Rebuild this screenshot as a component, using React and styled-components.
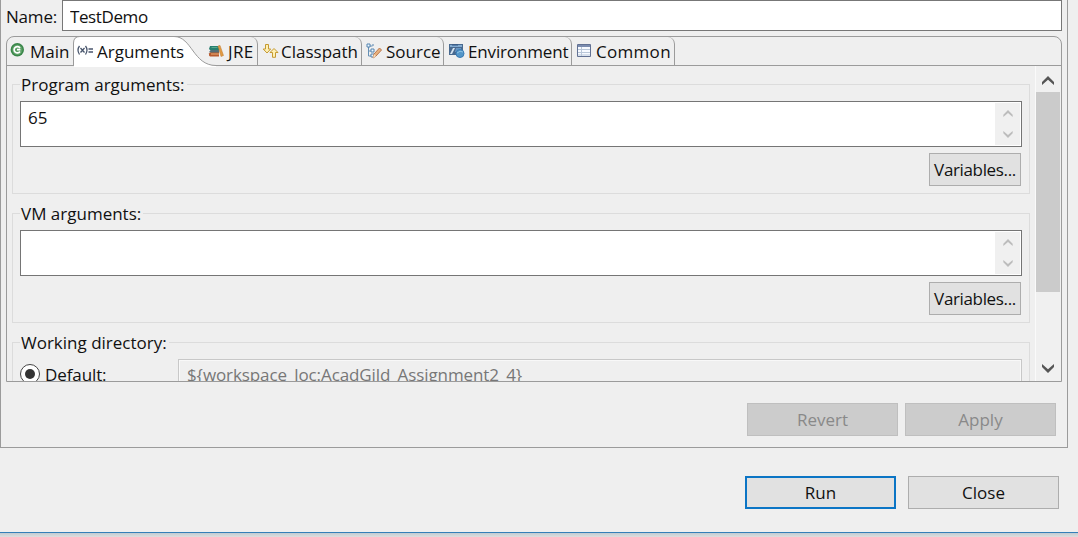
import React from "react";
import styled, { createGlobalStyle, css } from "styled-components";

const Global = createGlobalStyle`
  * { box-sizing: border-box; }
  html, body { margin: 0; background: #efefef; overflow: hidden; }
  body, button, input, textarea { font: 17px/24px "Open Sans", "Noto Sans", sans-serif; color: #111; }
`;

const Dialog = styled.main`
  width: 1078px; height: 537px; display: flex; flex-direction: column;
  background: #efefef; white-space: nowrap;
`;
const Editor = styled.section`
  width: 1068px; height: 448px; flex: none; padding: 0 5px;
  border: solid #9b9b9b; border-width: 0 1px 1px;
`;
const NameRow = styled.label`
  display: flex; height: 31px; margin-bottom: 5px;
`;
const NameLabel = styled.span`
  width: 56px; padding-top: 5px; letter-spacing: -.2px;
`;
const NameInput = styled.input`
  flex: 1; min-width: 0; height: 31px; padding: 2px 0 0 7px; border: 1px solid #777;
  background: #fff; outline: 0; border-radius: 0; letter-spacing: -.4px;
`;
const Folder = styled.div`
  height: 346px; border: 1px solid #9b9b9b; border-radius: 8px 8px 0 0;
  display: flex; flex-direction: column; overflow: hidden;
`;
const TabBar = styled.div`
  height: 29px; flex: none; display: flex; border-bottom: 1px solid #9b9b9b;
`;
const Tab = styled.div`
  position: relative; width: ${p => p.$width}px; height: 29px; display: flex; flex: none;
  padding-left: ${p => p.$inset}px;
  ${p => !p.$active && css`height: 28px; border-right: 1px solid #9b9b9b; border-top-right-radius: 7px;`}
  ${p => p.$plain && css`border-right: 0;`}
`;
const ActiveShape = styled.svg`
  position: absolute; left: -1px; top: -1px; pointer-events: none;
`;
const TabIcon = styled.svg`
  position: relative; flex: none; width: 18px; height: 18px; margin-top: 5px;
`;
const TabText = styled.span`
  position: relative; margin-left: ${p => p.$gap}px; padding-top: 3px; letter-spacing: ${p => p.$spacing || 0}px;
`;
const Viewport = styled.div`
  flex: 1; min-height: 0; display: flex; overflow: hidden;
`;
const Groups = styled.div`
  width: 1028px; padding: 6px 5px 0 5px; overflow: hidden;
`;
const Group = styled.fieldset`
  height: 122px; margin: 0 0 7px; padding: 0 7px 7px; min-width: 0; border: 1px solid #dcdcdc;
`;
const Legend = styled.legend`
  height: 24px; padding: 1px 2px 0 1px;
`;
const EntryBox = styled.div`
  height: 46px; margin-top: 5px; margin-bottom: 6px; padding: 1px; display: flex;
  border: 1px solid #757575; background: #fff;
`;
const Entry = styled.div`
  flex: 1; padding: 3px 0 0 6px;
`;
const Spinner = styled.div`
  width: 25px; background: #f0f0f0; display: flex; flex-direction: column;
  align-items: center; justify-content: space-between; padding: 7px 0;
`;
const Actions = styled.div`
  display: flex; justify-content: flex-end; gap: ${p => p.$gap || 0}px;
  padding: ${p => p.$padding || "0"};
`;
const Button = styled.button`
  width: ${p => p.$width || 151}px; height: 33px; padding: 1px 0 0; border: 1px solid #adadad;
  border-radius: 0; background: #e1e1e1; letter-spacing: ${p => p.$spacing || 0}px;
  ${p => p.$primary && css`border: 2px solid #0b75c5;`}
  &:disabled { color: #898989; background: #ccc; border-color: #bfbfbf; }
`;
const DefaultRow = styled.div`
  display: flex; height: 34px; margin-top: 5px;
`;
const Radio = styled.div`
  width: 20px; height: 20px; margin-top: 5px; border: 1.5px solid #444; border-radius: 50%;
  display: grid; place-items: center; background: #fff; flex: none;
  &::after { content: ""; width: 10px; height: 10px; border-radius: 50%; background: #333; }
`;
const RadioText = styled.span`
  width: 138px; padding: 4px 0 0 5px; letter-spacing: -.1px;
`;
const Directory = styled.div`
  flex: 1; padding: 3px 0 0 8px; border: 1px solid #c8c8c8; color: #777;
  box-shadow: inset 0 0 0 1px #f8f8f8; letter-spacing: -.1px;
`;
const Scrollbar = styled.div`
  width: 26px; display: flex; flex-direction: column; border-left: 1px solid #fafafa;
  padding-right: 1px; background: #f0f0f0;
`;
const ScrollButton = styled.div`
  height: 26px; display: grid; place-items: center; padding-top: ${p => p.$end ? 1 : 3}px;
`;
const Thumb = styled.div`
  height: 200px; width: 24px; margin-bottom: auto; background: #cbcbcb;
`;
const Footer = styled.footer`
  height: 85px; display: flex; flex-direction: column; border-bottom: 1px solid #347fb8;
`;
const Shadow = styled.div`
  flex: 1; background: linear-gradient(#c2cbd2, #dedede);
`;

function Chevron({ down, large }) {
  return <svg width={large ? 12 : 10} height={large ? 9 : 7} viewBox="0 0 12 9">
    <path d={down ? "M0 0L6 5.2L12 0V3L6 9L0 3Z" : "M0 9L6 3.8L12 9V6L6 0L0 6Z"} fill={large ? "#555" : "#bcbcbc"} />
  </svg>;
}

const icons = {
  main: <><circle cx="9.3" cy="7.7" r="6.7" fill="#398649" /><circle cx="9.3" cy="7.7" r="5.2" fill="#5b9f65" /><path d="M12 6A3.2 3.2 0 1 0 12 9.5M9 7.7h3.4" fill="none" stroke="#fff" strokeWidth="1.7" /></>,
  args: <g fill="none" stroke="#49566d" strokeWidth="1.3"><path d="M3.5 4Q.5 8 3.5 12.5M9.5 4q3 4 0 8.5M4.5 6l4 4.5M8.5 6l-4 4.5M12.5 7h4.5M12.5 10h4.5" /></g>,
  jre: <><path d="M3 4h8l1 2v3H4L2 7Z" fill="#267f70" /><path d="M4 5h6l1 1H5Z" fill="#57a98b" /><path d="M4 8h8v3H4L2 10Z" fill="#536f77" /><path d="M3 10.5h9v4H3l-1-1v-2Z" fill="#b85b2f" /><path d="M4 12h8" stroke="#e7ae77" /><path d="M11 4l2-.6L16.5 13.5l-2.5 1Z" fill="#e19a42" stroke="#bc792e" strokeWidth=".5" /></>,
  path: <g fill="#fff1b5" stroke="#c59a32" strokeWidth="1"><path d="M4.5 2.5h3v4.5h2.2L6 11 2.2 7h2.3Z" /><path d="M13 6.5l4 4h-2.5v4.8h-3v-4.8H9Z" /></g>,
  source: <><path d="M3.5 3v11h3M3.5 9h3M3.5 4h4" fill="none" stroke="#658fb4" /><g fill="#eef8ff" stroke="#5584b0"><path d="M2 2h3v3H2ZM6 7h3v3H6ZM6 12h3v3H6ZM7 3h2" /></g><path d="M8 16l1-4 5.5-6 2 2-5.5 6Z" fill="#e9b27d" stroke="#b8764e" /><path d="M8 16l1-4 2 2Z" fill="#f9dfbd" /></>,
  environment: <><path d="M2 2h14v11H2Z" fill="#48698f" /><path d="M3 3h12v2H3Z" fill="#83abd1" /><path d="M5 3h6" stroke="#315581" /><path d="M3 12l3-6h2l-3 6Z" fill="#d6e4f0" /><path d="M9 6h5v4H8Z" fill="#6795c3" /><circle cx="13" cy="11.5" r="4" fill="#5496c8" stroke="#397ab3" /><path d="M10 11q3-3 6-1" fill="none" stroke="#8fc3e3" /></>,
  common: <><path d="M2.5 2.5h13v12h-13Z" fill="#f7faff" stroke="#627193" /><path d="M3 3h12v2H3Z" fill="#7b8caf" /><path d="M3 7.5h12M3 10.5h12M3 13h12M6.5 5v9" stroke="#b9c7d9" fill="none" /></>
};

const tabs = [
  { name: "Main", icon: "main", width: 67, inset: 1, gap: 4, plain: true },
  { name: "Arguments", icon: "args", width: 126, inset: 2, gap: 3, active: true },
  { name: "JRE", icon: "jre", width: 58, inset: 7, gap: 3, spacing: .4 },
  { name: "Classpath", icon: "path", width: 104, inset: 3, gap: 2 },
  { name: "Source", icon: "source", width: 82, inset: 3, gap: 3 },
  { name: "Environment", icon: "environment", width: 128, inset: 3, gap: 3, spacing: -.15 },
  { name: "Common", icon: "common", width: 103, inset: 3, gap: 3, spacing: .3 }
];

function LaunchTab({ tab }) {
  return <Tab $width={tab.width} $inset={tab.inset} $active={tab.active} $plain={tab.plain}>
    {tab.active && <ActiveShape width="148" height="31" viewBox="0 0 148 31">
      <path d="M1 31V7Q1 1 7 .5H101C119 .5 120 29.5 143 29.5V31Z" fill="#fff" />
      <path d="M.5 30V7Q.5 .5 7 .5H101C119 .5 120 29.5 143 29.5" fill="none" stroke="#9b9b9b" />
    </ActiveShape>}
    <TabIcon viewBox="0 0 18 18">{icons[tab.icon]}</TabIcon>
    <TabText $gap={tab.gap} $spacing={tab.spacing}>{tab.name}</TabText>
  </Tab>;
}

function ArgumentGroup({ title, value }) {
  return <Group>
    <Legend>{title}</Legend>
    <EntryBox><Entry>{value}</Entry><Spinner><Chevron /><Chevron down /></Spinner></EntryBox>
    <Actions $padding="0 1px 0 0"><Button $width={92} $spacing={-.35}>Variables...</Button></Actions>
  </Group>;
}

export default function App() {
  return <><Global /><Dialog>
    <Editor>
      <NameRow><NameLabel>Name:</NameLabel><NameInput defaultValue="TestDemo" /></NameRow>
      <Folder>
        <TabBar>{tabs.map(tab => <LaunchTab key={tab.name} tab={tab} />)}</TabBar>
        <Viewport>
          <Groups>
            <ArgumentGroup title="Program arguments:" value="65" />
            <ArgumentGroup title="VM arguments:" />
            <Group><Legend>Working directory:</Legend><DefaultRow>
              <Radio /><RadioText>Default:</RadioText><Directory>{"${workspace_loc:AcadGild_Assignment2_4}"}</Directory>
            </DefaultRow></Group>
          </Groups>
          <Scrollbar><ScrollButton><Chevron large /></ScrollButton><Thumb /><ScrollButton $end><Chevron large down /></ScrollButton></Scrollbar>
        </Viewport>
      </Folder>
      <Actions $gap={7} $padding="21px 6px 0 0"><Button disabled>Revert</Button><Button disabled>Apply</Button></Actions>
    </Editor>
    <Footer><Actions $gap={12} $padding="28px 19px 0 0"><Button $primary>Run</Button><Button>Close</Button></Actions></Footer>
    <Shadow />
  </Dialog></>;
}
